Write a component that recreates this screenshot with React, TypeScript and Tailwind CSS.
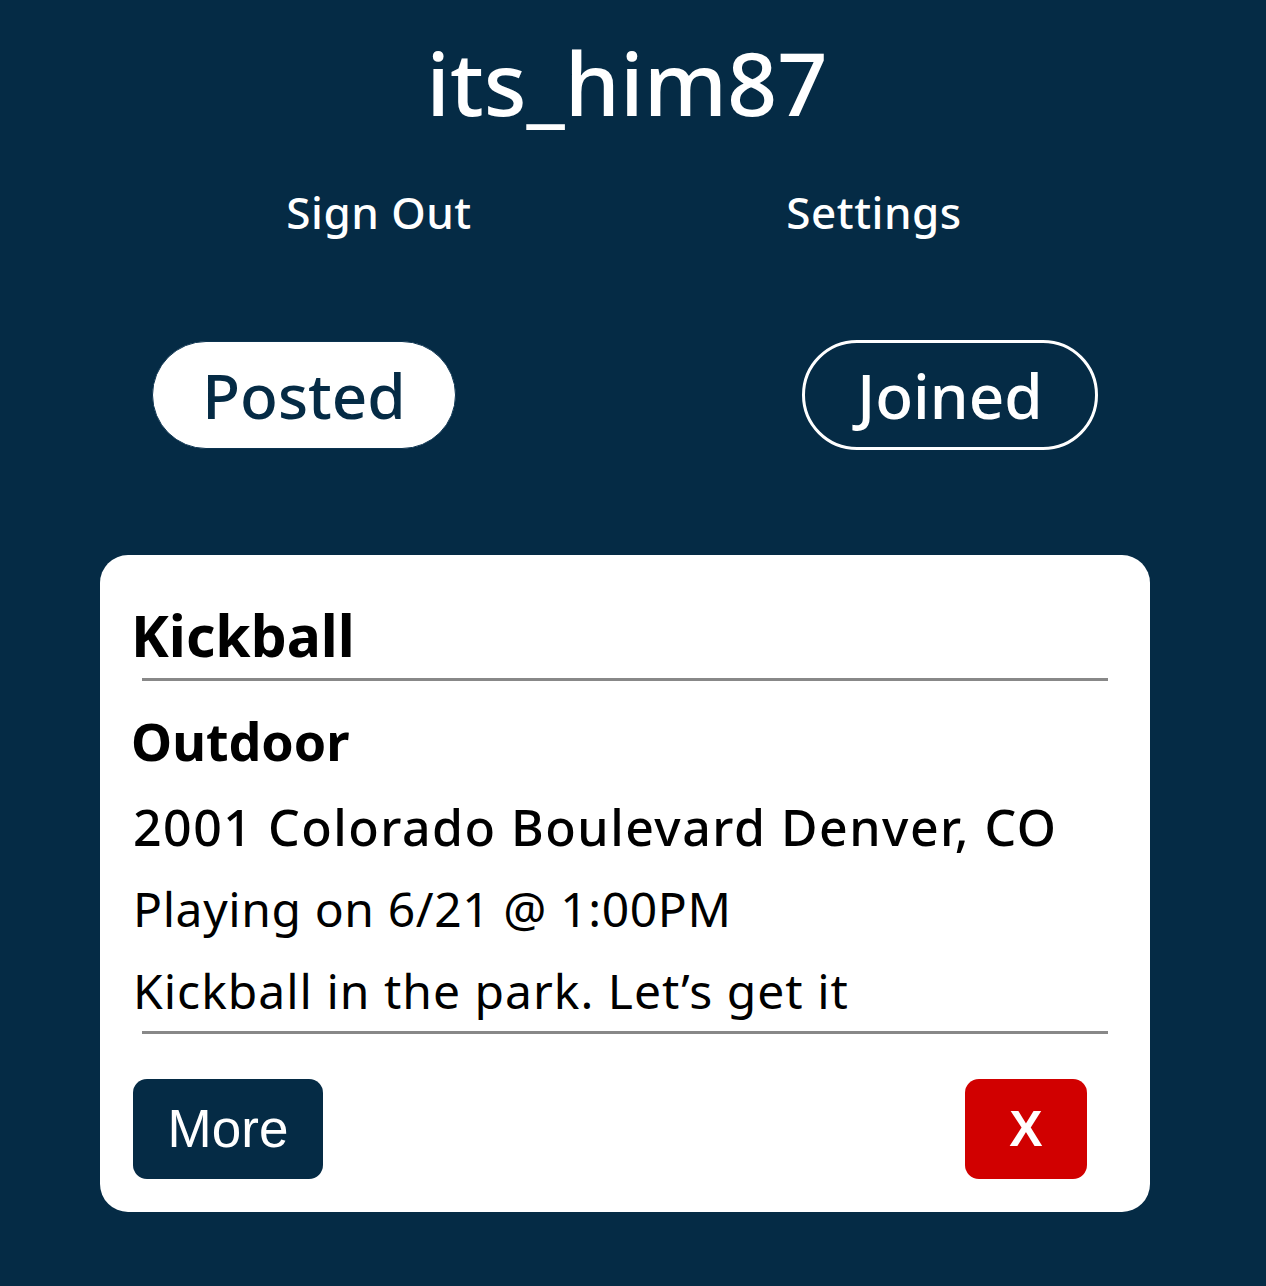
import React from "react";

export default function App() {
  const font = { fontFamily: '"Noto Sans", "Open Sans", sans-serif' };
  return (
    <div className="w-[1266px] h-[1286px] bg-[#052b45] text-white overflow-hidden" style={font}>
      <div className="pt-[22px] pr-[12px] text-center text-[88px] leading-[120px] font-medium">its_him87</div>
      <div className="flex mt-[40px] h-[60px] items-center">
        <div className="w-[758px] text-center text-[44px] font-medium tracking-[0.5px]">Sign Out</div>
        <div className="text-center text-[44px] font-medium w-[232px] tracking-[0.5px]">Settings</div>
      </div>
      <div className="flex mt-[98px] h-[110px] items-center">
        <div className="ml-[152px] w-[304px] h-[108px] rounded-full bg-white border border-[#0b3350] flex items-center justify-center text-[#052b45] text-[62px] font-medium">
          Posted
        </div>
        <div className="ml-[346px] w-[296px] h-[110px] rounded-full border-[3px] border-white flex items-center justify-center text-[62px] font-medium">
          Joined
        </div>
      </div>
      <div className="ml-[100px] mt-[105px] w-[1050px] h-[657px] bg-white rounded-[28px] text-black px-[33px] pt-[40px]">
        <div className="text-[57px] font-bold leading-[80px] -ml-[2px]">Kickball</div>
        <div className="ml-[9px] w-[966px] h-[3px] bg-[#888888] mt-[3px]"></div>
        <div className="text-[52px] font-bold leading-[80px] mt-[20px] -ml-[2px]">Outdoor</div>
        <div className="text-[50px] font-medium leading-[80px] mt-[6px] tracking-[1.5px]">2001 Colorado Boulevard Denver, CO</div>
        <div className="text-[48px] leading-[80px] mt-[2px] tracking-[0.6px]">Playing on 6/21 @ 1:00PM</div>
        <div className="text-[48px] leading-[80px] mt-[2px] tracking-[1px]">Kickball in the park. Let’s get it</div>
        <div className="ml-[9px] w-[966px] h-[3px] bg-[#888888] mt-[0px]"></div>
        <div className="flex justify-between mt-[45px] pr-[30px]">
          <button className="w-[190px] h-[100px] rounded-[14px] bg-[#052b45] text-white text-[53px]" style={{ fontFamily: '"Liberation Sans", Arial, sans-serif' }}>
            More
          </button>
          <button className="w-[122px] h-[100px] rounded-[14px] bg-[#d10000] text-white text-[50px] font-bold" style={{ fontFamily: '"Liberation Sans", Arial, sans-serif' }}>
            X
          </button>
        </div>
      </div>
    </div>
  );
}
